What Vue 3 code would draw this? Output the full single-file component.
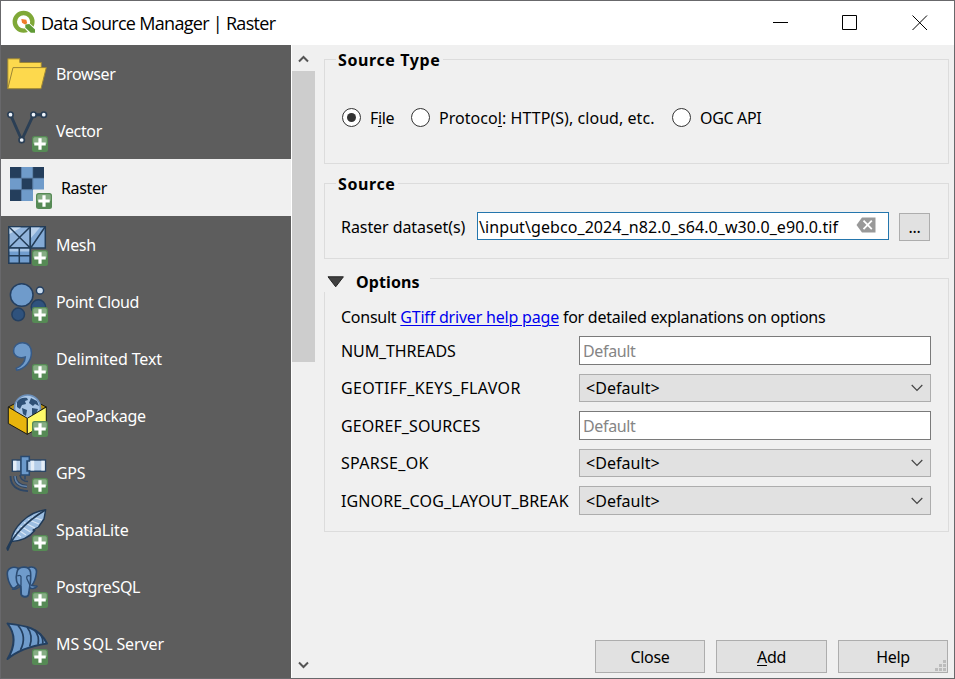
<script setup>
import { ref } from 'vue'

const sources = [
  { id: 'browser', label: 'Browser' },
  { id: 'vector', label: 'Vector' },
  { id: 'raster', label: 'Raster' },
  { id: 'mesh', label: 'Mesh' },
  { id: 'pointcloud', label: 'Point Cloud' },
  { id: 'text', label: 'Delimited Text', loose: true },
  { id: 'geopackage', label: 'GeoPackage' },
  { id: 'gps', label: 'GPS' },
  { id: 'spatialite', label: 'SpatiaLite', loose: true },
  { id: 'postgres', label: 'PostgreSQL' },
  { id: 'mssql', label: 'MS SQL Server', loose: true },
]
const active = ref('raster')

const options = [
  { name: 'NUM_THREADS', kind: 'text', track: -0.1 },
  { name: 'GEOTIFF_KEYS_FLAVOR', kind: 'combo', track: 0.38 },
  { name: 'GEOREF_SOURCES', kind: 'text', track: 0.1 },
  { name: 'SPARSE_OK', kind: 'combo', track: 0.3 },
  { name: 'IGNORE_COG_LAYOUT_BREAK', kind: 'combo', tall: true, track: 0.13 },
]
</script>

<template>
  <div class="window">
    <header class="titlebar">
      <svg class="logo" width="26" height="26" viewBox="0 0 26 26">
        <circle cx="12.6" cy="11.8" r="8.8" fill="none" stroke="#7fa837" stroke-width="4.4" />
        <path d="M13 13 L17.5 12.2 L24.5 18.5 V23.5 H18.3 L12.6 17.3 Z" fill="#fff" />
        <path d="M14.3 14.6 L18.3 14.1 L24 19.4 V22.8 H19.8 L14.3 17.8 Z" fill="#5f9a35" />
        <path d="M10.3 9 L15.3 9.8 L16.2 13.2 L14 14.6 L11 12.8 Z" fill="#ee7c2b" />
      </svg>
      <h1 class="title">Data Source Manager | Raster</h1>
      <div class="controls">
        <svg width="16" height="16" viewBox="0 0 16 16"><path d="M0 7.5H15" /></svg>
        <svg width="16" height="16" viewBox="0 0 16 16"><path d="M.5 .5H14.5V14.5H.5Z" /></svg>
        <svg width="16" height="16" viewBox="0 0 16 16"><path d="M.5 .5L15 15M15 .5L.5 15" /></svg>
      </div>
    </header>

    <div class="body">
      <nav class="sidebar">
        <a v-for="s in sources" :key="s.id" class="item" :class="{ active: s.id === active, loose: s.loose }" @click="active = s.id">
          <svg class="icon" width="55" height="57" viewBox="1 0 55 57">
            <g v-if="s.id === 'browser'" fill="#fdd94d" stroke="#9c8536" stroke-width="1">
              <path d="M7.8 43.5V13.8H19.8V17.5H41.3V23L36 43.5Z" />
              <path d="M13 22.6H46.3L41 43.7H7.8Z" />
            </g>
            <g v-else-if="s.id === 'vector'">
              <path d="M10.5 14.7L21.7 40L33.5 14.7H43.8" fill="none" stroke="#2b3f55" stroke-width="2.9" transform="translate(0 -2)" />
              <g fill="#eef4fb" stroke="#2b3f55" stroke-width="1.7">
                <circle cx="10.5" cy="12.7" r="2.7" /><circle cx="21.7" cy="38" r="2.7" />
                <circle cx="33.5" cy="12.7" r="2.7" /><circle cx="43.8" cy="12.7" r="2.7" />
              </g>
            </g>
            <g v-else-if="s.id === 'raster'">
              <path d="M10 8H44V30.5H33V42H10Z" fill="#6f9bca" />
              <path d="M10 8H21V19H10ZM33 8H44V19H33ZM21.8 19.3H32.4V30.3H21.8ZM10 30.8H21V42H10Z" fill="#243e5c" />
              <path d="M21.4 8V42M32.8 8V30.6M10 19.2H44M10 30.6H33" stroke="#4f6f92" stroke-width=".7" fill="none" />
            </g>
            <g v-else-if="s.id === 'mesh'" stroke="#233c57" stroke-width="1.5">
              <path d="M8.8 10.7H30.3V32H8.8Z" fill="#91b4dc" />
              <path d="M9.5 18V11.5H21Z" fill="#c8dbef" stroke="none" />
              <path d="M30.3 10.7H45.3V32H30.3Z" fill="#83aad6" />
              <path d="M31 22V11.5H40Z" fill="#b9d0ea" stroke="none" />
              <path d="M8.8 32H30.3V47.3H8.8Z" fill="#719dce" />
              <path d="M9.6 32.9H29.5V35.5H9.6Z" fill="#a9c5e5" stroke="none" />
              <path d="M8.8 10.7L30.3 32M30.3 10.7L8.8 32M31 31.5L45 11M19.3 32V47M9 39.7H30M30.3 32V47" fill="none" />
            </g>
            <g v-else-if="s.id === 'pointcloud'" stroke="#243f60" stroke-width="1.5">
              <circle cx="21.7" cy="22" r="11.3" fill="#6f9bcb" />
              <circle cx="40" cy="17.5" r="3.6" fill="#c8dcf0" />
              <circle cx="38.4" cy="34" r="7.2" fill="#2f527d" />
              <circle cx="18.2" cy="41.4" r="6.3" fill="#2f527d" />
            </g>
            <path v-else-if="s.id === 'text'" d="M22.5 12.8C28.5 12.8 31.6 17.2 31.4 23C31.2 31.5 25 38.5 16.8 40.2L16.2 38.4C21.5 36 25 32 25.3 27C19 29 13.6 26 13.6 20.7C13.6 16 17.5 12.8 22.5 12.8Z" fill="#6f9bcb" stroke="#365a87" stroke-width="1.5" />
            <g v-else-if="s.id === 'geopackage'" stroke-linejoin="round">
              <path d="M8.3 20L27.3 10L46.3 20L27.3 31Z" fill="#b58c10" stroke="#1b1b12" />
              <circle cx="27.5" cy="21" r="13" fill="#a9c6e6" stroke="#6b8fba" stroke-width="1.6" />
              <path d="M17 15C19 11 24 10 27 11L28 13L25 14L26 17L22 18L20 22L17 20ZM22 21L27 23L26 29L23 27ZM31 11L37 14L39 19L35 17L33 19L29 16ZM32 21L38 22L36 27L32 28Z" fill="#2e5076" />
              <path d="M8.3 20L27.3 31.3V47.3L8.3 36.5Z" fill="#e8b50d" stroke="#1b1b12" />
              <path d="M46.3 20L27.3 31.3V47.3L46.3 36.5Z" fill="#fff968" stroke="#1b1b12" />
            </g>
            <g v-else-if="s.id === 'gps'" fill="none">
              <path d="M10.5 32C10.5 41 16 46.5 28 47.2" stroke="#2d4665" stroke-width="1.8" />
              <path d="M15 32C15 38.5 19 42 27 42.5" stroke="#2d4665" stroke-width="3.4" />
              <path d="M15 32C15 38.5 19 42 27 42.5" stroke="#6583a6" stroke-width="1.4" />
              <path d="M20 31C20.5 35 23 37.5 28 37.5" stroke="#2d4665" stroke-width="1.6" />
              <path d="M12.3 16H21V27.3H12.3ZM27.5 16H45.5V27.3H27.5Z" fill="#b4cde9" stroke="#2b4665" stroke-width="1.4" />
              <path d="M14.8 16.7V26.6M32.5 16.7V26.6M43 16.7V26.6" stroke="#e4edf7" stroke-width="3.4" />
              <path d="M21 12.6H29.3V17H27V27H29.3V31H21Z" fill="#6c9acb" stroke="#28496f" stroke-width="1.5" />
              <path d="M25 32V35.5" stroke="#28496f" stroke-width="1.5" />
            </g>
            <g v-else-if="s.id === 'spatialite'" stroke="#203a57" stroke-linejoin="round">
              <path d="M45.7 8.7C38 9.7 29 13.5 22 20.5C16 26.5 12 33 11.2 39L7 47L7.8 49.3L11.5 40.5C21 40 29.5 36 34.8 29.5L33 29L38.5 26L44 18Z" fill="#9bbde1" stroke-width="1.4" />
              <path d="M15 32L21 36M17.5 28.5L26 34M20.5 25L30.5 31M24 21.5L35 27M28 18.5L39 23M32 16L42 19" stroke="#d8e6f5" stroke-width="1.3" />
              <path d="M7.3 48.5C13 35 25 21.5 45 9.3" fill="none" stroke-width="1.7" />
            </g>
            <g v-else-if="s.id === 'postgres'" fill="#6f9bcb" stroke="#2b4b72" stroke-width="1.6" stroke-linejoin="round">
              <path d="M28 10C32 7.5 37 10 36.5 14C36 19 34 25 31.5 27.5L37 28.2C35 31 31 31 29.5 29.5L28.5 36.5C27.8 39.6 22 39.6 21.2 36.3L20.5 29Z" />
              <path d="M18.5 10.5C13 7.5 7 10.2 7.3 16C7.5 20 9.3 25.5 11.7 29C13.7 31.5 16 29 18.5 26.5Z" />
              <path d="M17 14C18 8 29 7 30.5 14C31 18 30.5 24 29.7 29L28.4 36.8C27 39.4 22.5 39.2 21.3 36.7L21 28C16 27 15.5 20 17 14Z" />
              <path d="M17.3 18C20 16.5 21.5 18 21 20.5V27M30.3 18C27.5 17 26 18 27 21L29.8 27M12 31C16 32 19 29.5 21 27" fill="none" stroke-width="1.3" />
            </g>
            <g v-else stroke="#233f60" stroke-linejoin="round">
              <path d="M7.5 8.5C24 10.5 39 12 47 28.5C31 31 18 35 7.5 44C16 30 15 18 7.5 8.5Z" fill="#6f9bcb" stroke-width="2" />
              <path d="M18 10.5C24.5 18 24.5 27 20.5 35M27 12C32.5 19 32 25 29.7 31.5M34.5 15C39 20 39 25 38 29.7M40 18.5C42.5 22 43 26 42.8 28.8" fill="none" stroke-width="1.7" />
            </g>
            <g v-if="s.id !== 'browser'" class="badge">
              <rect x="32" y="34" width="16" height="16" rx="2.5" fill="#568a55" />
              <rect x="33.2" y="35.2" width="13.6" height="7" rx="1.5" fill="#86ad84" />
              <path d="M40 36.3V47.7M34.3 42H45.7" stroke="#fff" stroke-width="3.2" />
            </g>
          </svg>
          <span class="label">{{ s.label }}</span>
        </a>
      </nav>

      <div class="scrollbar">
        <svg width="23" height="26" viewBox="0 0 23 26"><path d="M7 16.5L11.5 12L16 16.5" /></svg>
        <div class="thumb"></div>
        <svg class="down" width="23" height="26" viewBox="0 0 23 26"><path d="M7 10.5L11.5 15L16 10.5" /></svg>
      </div>

      <main class="content">
        <section class="group type">
          <h2 class="caption">Source Type</h2>
          <div class="radios">
            <label class="radio"><i class="dot on"></i><span>F<u>i</u>le</span></label>
            <label class="radio protocol"><i class="dot"></i><span>Protoco<u>l</u>: HTTP(S), cloud, etc.</span></label>
            <label class="radio"><i class="dot"></i><span>OGC API</span></label>
          </div>
        </section>

        <section class="group source">
          <h2 class="caption">Source</h2>
          <div class="dataset">
            <span class="dataset-label">Raster dataset(s)</span>
            <div class="path">
              <span class="path-text">\input\gebco_2024_n82.0_s64.0_w30.0_e90.0.tif</span>
              <svg width="20" height="16" viewBox="0 0 20 16">
                <path d="M6 .5H19.5V15.5H6L.5 8Z" fill="#999" />
                <path d="M7.5 3.7L15.8 12.2M15.8 3.7L7.5 12.2" stroke="#fff" stroke-width="1.8" />
              </svg>
            </div>
            <button class="browse">...</button>
          </div>
        </section>

        <section class="group opts">
          <h2 class="caption collapsible">
            <svg width="18" height="12" viewBox="0 0 18 12"><path d="M1 .8H16.4L8.7 10.8Z" fill="#404040" stroke="#222" /></svg>
            <span>Options</span>
          </h2>
          <p class="hint">Consult <a class="link">GTiff driver help page</a> for detailed explanations on options</p>
          <div class="rows">
            <div v-for="o in options" :key="o.name" class="row" :class="[o.kind, { tall: o.tall }]">
              <span class="name" :style="{ letterSpacing: o.track + 'px' }">{{ o.name }}</span>
              <div class="field">
                <span>{{ o.kind === 'text' ? 'Default' : '<Default>' }}</span>
                <svg v-if="o.kind === 'combo'" width="12" height="8" viewBox="0 0 12 8"><path d="M.7 1L6 6.3L11.3 1" fill="none" stroke="#444" stroke-width="1.2" /></svg>
              </div>
            </div>
          </div>
        </section>

        <footer class="buttons">
          <button class="btn">Close</button>
          <button class="btn wide"><u>A</u>dd</button>
          <button class="btn">Help
            <svg class="grip" width="12" height="12" viewBox="0 0 12 12"><path d="M8 0h3v3h-3zM4 4h3v3h-3zM8 4h3v3h-3zM0 8h3v3h-3zM4 8h3v3h-3zM8 8h3v3h-3z" fill="#bcbcbc" /></svg>
          </button>
        </footer>
      </main>
    </div>
  </div>
</template>

<style>
body { margin: 0; overflow: hidden; }
</style>

<style scoped>
* { box-sizing: border-box; }
.window {
  width: 955px; height: 679px; border: 1px solid #68686b; background: #f0f0f0;
  display: flex; flex-direction: column; overflow: hidden;
  font: 16px/20px "Noto Sans", sans-serif; letter-spacing: -0.35px; color: #000;
}
h1, h2, p { margin: 0; font-weight: 400; font-size: inherit; }
u { text-decoration-thickness: 1px; text-underline-offset: 2px; }
.titlebar { height: 44px; flex: none; background: #fff; display: flex; align-items: center; padding-left: 10px; }
.logo { flex: none; }
.title { margin-left: 4px; font: 18px/26px "Open Sans", sans-serif; letter-spacing: -0.7px; }
.controls { margin-left: auto; display: flex; gap: 54px; padding-right: 26px; }
.controls svg { fill: none; stroke: #000; stroke-width: 1; display: block; }
.controls svg:first-child { margin-right: -1px; }
.body { flex: 1; min-height: 0; display: flex; }
.sidebar { width: 290px; flex: none; overflow: hidden; background: #5d5d5d; color: #fff; }
.item { display: flex; align-items: center; height: 57px; }
.icon { flex: none; }
.label { white-space: nowrap; }
.loose .label { letter-spacing: -0.12px; }
.active { background: #f0f0f0; color: #000; }
.active .label { margin-left: 5px; }
.active .badge { transform: translateX(4px); }
.scrollbar { width: 25px; flex: none; border-left: 1px solid #fff; display: flex; flex-direction: column; }
.scrollbar svg { display: block; fill: none; stroke: #555; stroke-width: 2; }
.thumb { width: 23px; height: 291px; background: #cdcdcd; }
.down { margin-top: auto; }
.content { flex: 1; min-width: 0; display: flex; flex-direction: column; padding: 14px 5px 5px 8px; }
.group { border: 1px solid #dcdcdc; width: 625px; flex: none; }
.caption { font-weight: 700; letter-spacing: 0.6px; background: #f0f0f0; width: max-content; margin: -10px 0 0 11px; padding: 0 3px 0 2px; }
.type { height: 105px; }
.radios { display: flex; margin: 38px 0 0 17px; }
.radio { display: flex; align-items: center; gap: 9px; width: 69px; white-space: nowrap; }
.protocol { width: 261px; letter-spacing: 0.05px; }
.dot { width: 19px; height: 19px; border: 1px solid #333; border-radius: 50%; background: #fff; flex: none; display: flex; align-items: center; justify-content: center; margin-top: -2px; }
.on::after { content: ""; width: 9px; height: 9px; border-radius: 50%; background: #333; }
.source { height: 76px; margin-top: 19px; }
.dataset { display: flex; margin: 18px 0 0 16px; }
.dataset-label { width: 136px; line-height: 30px; white-space: nowrap; letter-spacing: -0.07px; }
.path { width: 412px; height: 28px; border: 1px solid #2476ad; background: #fff; display: flex; align-items: center; justify-content: space-between; padding: 0 12px 2px 1px; overflow: hidden; white-space: nowrap; }
.path-text { padding-top: 3px; letter-spacing: 0.08px; }
button { font: inherit; letter-spacing: inherit; color: inherit; background: #e1e1e1; border: 1px solid #adadad; padding: 0; }
.browse { width: 31px; height: 28px; margin: 1px 0 0 10px; }
.opts { height: 254px; margin-top: 19px; }
.collapsible { display: flex; align-items: center; gap: 11px; margin: -7px 0 0 -2px; padding: 0 10px 0 4px; letter-spacing: 0.1px; }
.hint { margin: 15px 0 0 16px; white-space: nowrap; letter-spacing: -0.25px; }
.link { color: #0000ee; text-decoration: underline; text-decoration-thickness: 1px; text-underline-offset: 2px; letter-spacing: -0.2px; }
.rows { display: flex; flex-direction: column; gap: 9px; margin: 9px 0 0 16px; }
.row { display: flex; align-items: center; height: 29px; }
.row.combo { height: 28px; }
.row.tall { height: 29px; }
.name { width: 238px; white-space: nowrap; }
.field { width: 352px; height: 100%; border: 1px solid #7a7a7a; background: #fff; color: #858585; display: flex; align-items: center; padding: 0 7px 0 3px; justify-content: space-between; }
.combo .field { background: #e1e1e1; border-color: #adadad; color: #000; padding-left: 6px; letter-spacing: 0.05px; }
.buttons { margin-top: auto; display: flex; justify-content: flex-end; gap: 11px; padding-right: 1px; }
.btn { width: 110px; height: 33px; position: relative; }
.wide { width: 111px; }
.grip { position: absolute; right: 0; bottom: 0; }
</style>
